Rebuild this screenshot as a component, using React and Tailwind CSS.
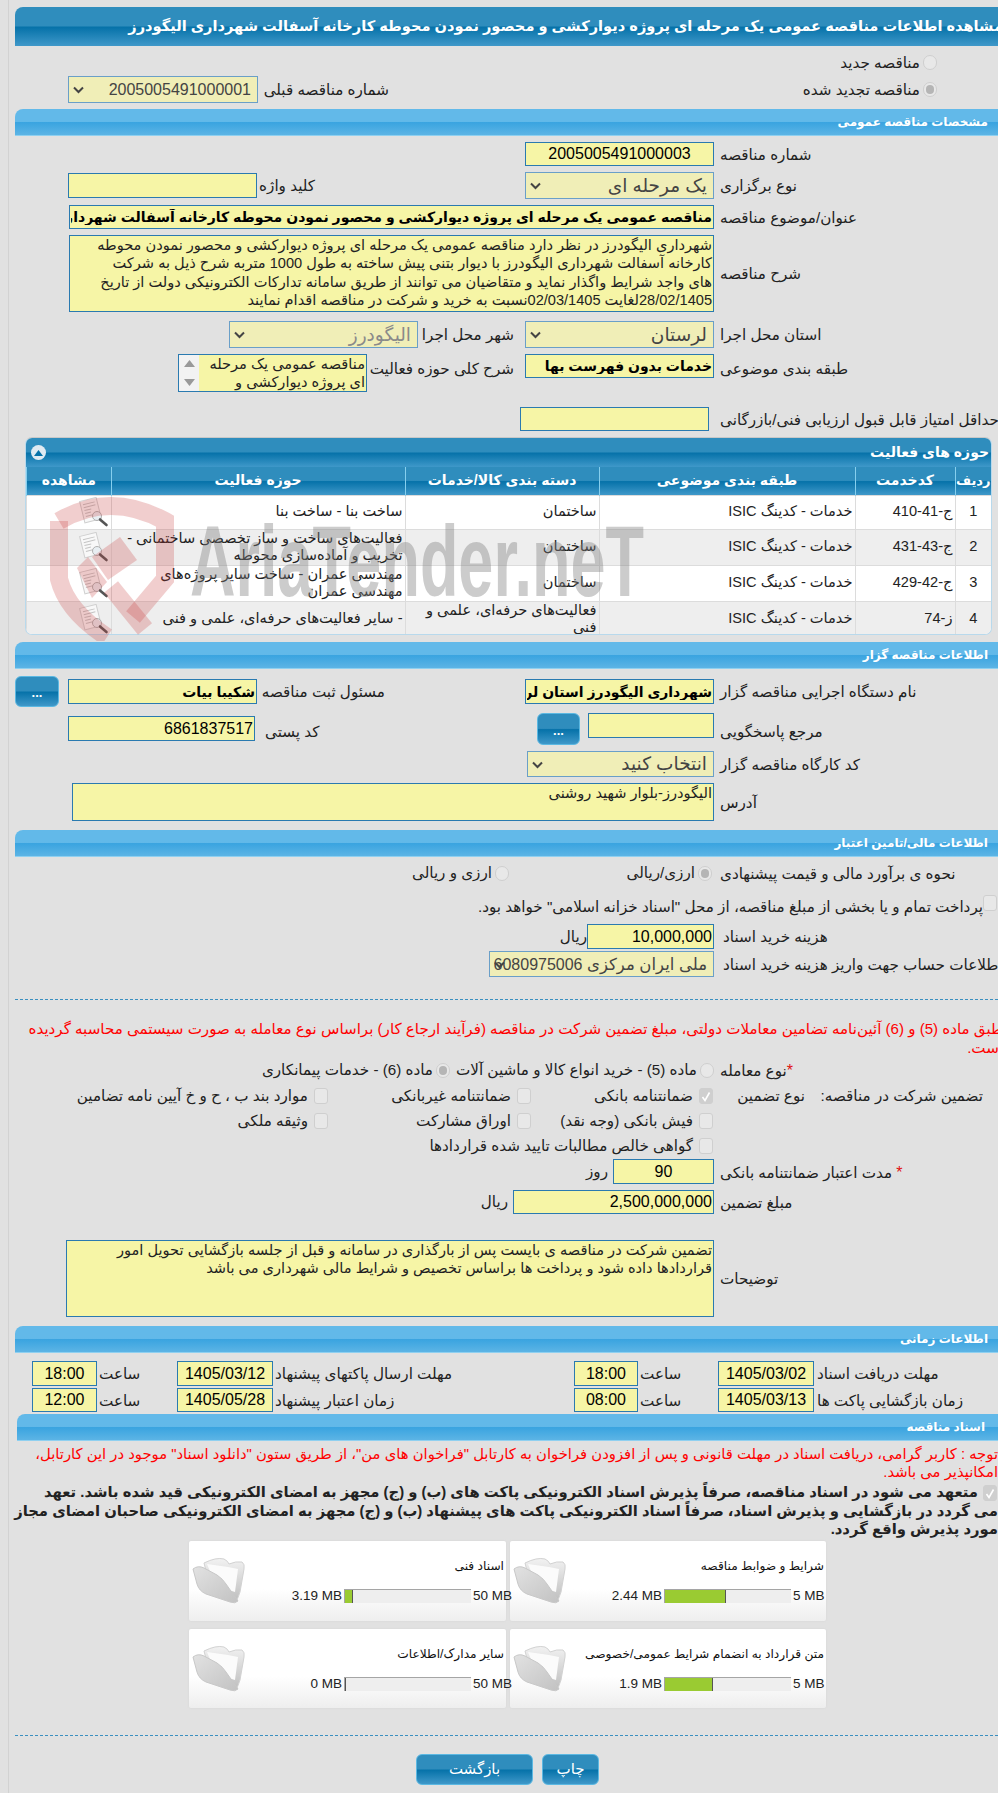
const darkBar = "bg-[linear-gradient(to_bottom,#2f8dbd_0%,#2f8dbd_48%,#0672a9_52%,#3f98c9_100%)]";
const Bar = ({ children, className = "" }) => (
  <div dir="rtl" className={"h-[27px] shrink-0 flex items-center pr-[20px] rounded-tl-[8px] border-b border-[#8fd0f0] bg-[linear-gradient(to_bottom,#62b9e9_0%,#62b9e9_48%,#3aa4e0_52%,#5cb4e5_100%)] text-white font-bold text-[12px] " + className}>
    {children}
  </div>
);
const Lbl = ({ children, className = "" }) => (
  <span className={"shrink-0 whitespace-nowrap text-left text-[15.2px] pt-[2px] text-[#222] " + className}>{children}</span>
);
const Txt = ({ children, className = "" }) => (
  <span className={"shrink-0 whitespace-nowrap text-[15.2px] pt-[1px] text-[#222] " + className}>{children}</span>
);
const Input = ({ value = "", bold = false, className = "" }) => (
  <input readOnly dir="rtl" value={value} className={"shrink-0 bg-[#f6f5a6] border border-[#2a7ab0] px-[1px] text-black outline-none " + (bold ? "font-bold text-[14px] " : "text-[16px] ") + className} />
);
const Area = ({ value, className = "" }) => (
  <textarea readOnly dir="rtl" value={value} className={"shrink-0 resize-none overflow-hidden bg-[#f6f5a6] border border-[#2a7ab0] px-[1px] text-[14.6px] leading-[18.3px] text-[#222] outline-none " + className} />
);
const Select = ({ children, className = "" }) => (
  <div className={"shrink-0 relative flex items-center justify-end bg-[#f0eeb7] border border-[#6a9fc8] pl-[4px] pr-[6px] text-[16px] whitespace-nowrap overflow-hidden " + className} dir="ltr">
    <svg className="absolute left-[3px] top-[8px]" width="13" height="10" viewBox="0 0 13 10"><path d="M2 2.5 L6.5 7 L11 2.5" fill="none" stroke="#444" strokeWidth="2" /></svg>
    <span dir="rtl">{children}</span>
  </div>
);
const Ar = ({ children }) => <span className="text-[18.5px]">{children}</span>;
const Radio = ({ on, className = "" }) => (
  <span className={"shrink-0 w-[14px] h-[15px] rounded-full bg-[#e8e8e8] border border-[#cfcfcf] flex items-center justify-center " + className}>
    {on && <span className="w-[8px] h-[9px] rounded-full bg-[#b5b5b5]" />}
  </span>
);
const Check = ({ on, className = "" }) => (
  <span className={"shrink-0 w-[14px] h-[16px] rounded-[3px] border border-[#cfcfcf] flex items-center justify-center " + (on ? "bg-[#cfcfcf] " : "bg-[#e8e8e8] ") + className}>
    {on && <svg width="10" height="11" viewBox="0 0 10 11"><path d="M1.5 6 L4 9.5 L8.5 1.5" fill="none" stroke="#fff" strokeWidth="1.6" /></svg>}
  </span>
);
const Dots = ({ className = "" }) => (
  <button className={"shrink-0 rounded-[6px] border border-[#5bb8e2] text-white text-[13px] font-bold flex items-end justify-center pb-[4px] " + darkBar + " " + className}>...</button>
);
const Row = ({ children, className = "" }) => (
  <div dir="rtl" className={"flex items-center " + className}>{children}</div>
);

const CheckCell = ({ on, children, className = "" }) => (
  <div className={"flex items-center shrink-0 " + className}>
    <Check on={on} />
    <Txt className="mr-[6px]">{children}</Txt>
  </div>
);

const Doc = () => (
  <svg width="30" height="30" viewBox="0 0 30 30" className="block">
    <g transform="rotate(-14 12 13)">
      <rect x="3" y="2" width="17" height="22" fill="#f8f8f8" stroke="#cfcfcf" />
      <path d="M5.5 6h12M5.5 9h12M5.5 12h7M5.5 15h6M5.5 18h10" stroke="#c4c4c4" strokeWidth="1" />
    </g>
    <circle cx="18" cy="19" r="4.5" fill="#e8eef2" stroke="#b0b0b0" />
    <path d="M21 22.5 L27.5 28" stroke="#555" strokeWidth="2.6" strokeLinecap="round" />
  </svg>
);

const Folder = () => (
  <svg width="54" height="48" viewBox="0 0 54 48" className="block">
    <defs>
      <linearGradient id="fa" x1="0" y1="0" x2="0" y2="1"><stop offset="0" stopColor="#f2f2f2" /><stop offset="1" stopColor="#bdbdbd" /></linearGradient>
      <linearGradient id="fb" x1="0" y1="0" x2="1" y2="1"><stop offset="0" stopColor="#e2e2e2" /><stop offset="1" stopColor="#c2c2c2" /></linearGradient>
    </defs>
    <path d="M12 7 Q24 1 32 3 Q36 5 37 8 Q44 5 50 6 Q53 8 52 13 L48 36 Q46 42 44 46 L20 38 Z" fill="url(#fa)" stroke="#d2d2d2" />
    <path d="M15 8 L36 11 L46 13 L43 36 L24 30 Z" fill="#fbfbfb" />
    <path d="M1 13 Q6 9 12 12 L25 19 Q31 23 34 28 L46 45 Q43 48 38 46 L14 38 Q7 35 5 28 Z" fill="url(#fb)" stroke="#c8c8c8" />
  </svg>
);

const Progress = ({ pct }) => (
  <div dir="ltr" className="w-[127px] h-[14px] shrink-0 bg-[#eeeeee] border-t border-l border-[#a5a5a5] mx-[2px]">
    <div className="h-full bg-[#9acb32] border-r border-[#555]" style={{ width: pct + "%" }} />
  </div>
);

const Card = ({ title, used, max, pct, w }) => (
  <div dir="rtl" className={"relative h-full pt-[16px] pr-[2px] shrink-0 rounded-[2px] bg-[linear-gradient(to_bottom,#ffffff_60%,#eeeeee_100%)] shadow-[0_0_2px_#d0d0d0] " + w}>
    <div className="text-[12.2px] text-[#111] whitespace-nowrap h-[20px]">{title}</div>
    <div className="flex items-center mt-[9px] text-[13.5px] text-[#222]">
      <span dir="ltr" className="pr-0 mr-[2px] w-[29px] text-right whitespace-nowrap">{max}</span>
      <Progress pct={pct} />
      <span dir="ltr" className="whitespace-nowrap">{used}</span>
    </div>
    <div className="absolute left-[3px] top-[15px]"><Folder /></div>
  </div>
);

const rows = [
  ["1", "ج-41-410", "خدمات - کدینگ ISIC", "ساختمان", "ساخت بنا - ساخت بنا", "h-[34px] bg-white"],
  ["2", "ج-43-431", "خدمات - کدینگ ISIC", "ساختمان", "فعالیت‌های ساخت و ساز تخصصی ساختمانی - تخریب و آماده‌سازی محوطه", "h-[35px] bg-[#eeeeee]"],
  ["3", "ج-42-429", "خدمات - کدینگ ISIC", "ساختمان", "مهندسی عمران - ساخت سایر پروژه‌های مهندسی عمران", "h-[35px] bg-white"],
  ["4", "ز-74", "خدمات - کدینگ ISIC", "فعالیت‌های حرفه‌ای، علمی و فنی", "- سایر فعالیت‌های حرفه‌ای، علمی و فنی", "h-[35px] bg-[#eeeeee]"],
];
const Th = ({ children, className = "" }) => (
  <th className={"border-l border-[#86cfee] font-bold text-white text-center whitespace-nowrap p-0 " + className}>{children}</th>
);
const Td = ({ children, className = "" }) => (
  <td className={"border-l border-t border-[#dcdcdc] text-[14.6px] leading-[17.5px] text-[#222] px-[2px] py-0 " + className}>{children}</td>
);

const TimeRow = ({ label1, date1, time1, label2, date2, time2, className = "" }) => (
  <Row className={className}>
    <Lbl className="w-[191px]">{label1}</Lbl>
    <Input value={date1} className="w-[96px] h-full mr-[3px] text-center" />
    <Lbl className="w-[43px] mr-[35px]">ساعت</Lbl>
    <Input value={time1} className="w-[64px] h-full mr-[2px] text-center" />
    <Lbl className="w-[184px] mr-[115px]">{label2}</Lbl>
    <Input value={date2} className="w-[96px] h-full mr-[2px] text-center" />
    <Lbl className="w-[42px] mr-[36px]">ساعت</Lbl>
    <Input value={time2} className="w-[65px] h-full mr-[2px] text-center" />
  </Row>
);

export default function App() {
  return (
    <div className="relative h-[1793px] w-full overflow-hidden bg-[#e1e1e1] font-['Liberation_Sans','DejaVu_Sans',sans-serif]">
      <div className="ml-[8px] border-l border-[#d2d2d2] pl-[6px] w-[1000px] h-full pt-[7px]">
        <div dir="rtl" className={"h-[39px] flex items-center pr-[5px] rounded-tl-[8px] text-white font-bold text-[14.6px] whitespace-nowrap " + darkBar}>
          مشاهده اطلاعات مناقصه عمومی یک مرحله ای پروژه دیوارکشی و محصور نمودن محوطه کارخانه آسفالت شهرداری الیگودرز
        </div>

        <Row className="mt-[6px] h-[21px] pr-[71px]">
          <Radio />
          <Txt className="mr-[3px]">مناقصه جدید</Txt>
        </Row>
        <Row className="mt-[3px] h-[27px] pr-[71px] justify-between">
          <div className="flex items-center">
            <Radio on />
            <Txt className="mr-[3px]">مناقصه تجدید شده</Txt>
          </div>
          <div className="flex items-center ml-[53px]">
            <Lbl className="w-[125px]">شماره مناقصه قبلی</Lbl>
            <Select className="w-[190px] h-[27px] mr-[6px] text-[#444]">2005005491000001</Select>
          </div>
        </Row>

        <Bar className="mt-[6px]">مشخصات مناقصه عمومی</Bar>

        <Row className="mt-[6px] h-[24px]">
          <Lbl className="w-[288px]">شماره مناقصه</Lbl>
          <Input value="2005005491000003" className="w-[189px] h-full mr-[6px] text-center" />
        </Row>
        <Row className="mt-[6px] h-[27px] justify-between">
          <div className="flex items-center">
            <Lbl className="w-[288px]">نوع برگزاری</Lbl>
            <Select className="w-[189px] h-[27px] mr-[6px] text-[#444]"><Ar>یک مرحله ای</Ar></Select>
          </div>
          <div className="flex items-center ml-[53px]">
            <Lbl className="w-[53px]">کلید واژه</Lbl>
            <Input className="w-[189px] h-[25px] mr-[5px]" />
          </div>
        </Row>
        <Row className="mt-[6px] h-[24px]">
          <Lbl className="w-[288px]">عنوان/موضوع مناقصه</Lbl>
          <Input bold value="مناقصه عمومی یک مرحله ای پروژه دیوارکشی و محصور نمودن محوطه کارخانه آسفالت شهرداری الیگودرز" className="w-[645px] h-full mr-[6px]" />
        </Row>
        <Row className="mt-[6px] h-[77px]">
          <Lbl className="w-[288px]">شرح مناقصه</Lbl>
          <Area className="w-[645px] h-full mr-[6px]" value={"شهرداری الیگودرز در نظر دارد مناقصه عمومی یک مرحله ای پروژه دیوارکشی و محصور نمودن محوطه\nکارخانه آسفالت شهرداری الیگودرز با دیوار بتنی پیش ساخته به طول 1000 متربه شرح ذیل به شرکت\nهای واجد شرایط واگذار نماید و متقاضیان می توانند از طریق سامانه تدارکات الکترونیکی دولت از تاریخ\n28/02/1405لغایت 02/03/1405نسبت به خرید و شرکت در مناقصه اقدام نمایند"} />
        </Row>
        <Row className="mt-[9px] h-[27px]">
          <Lbl className="w-[288px]">استان محل اجرا</Lbl>
          <Select className="w-[189px] h-full mr-[6px] text-[#444]"><Ar>لرستان</Ar></Select>
          <Lbl className="w-[90px] mr-[11px]">شهر محل اجرا</Lbl>
          <Select className="w-[189px] h-full mr-[6px] text-[#8a8a8a]"><Ar>الیگودرز</Ar></Select>
        </Row>
        <Row className="mt-[6px] h-[38px] items-start">
          <Lbl className="w-[288px] mt-[2px]">طبقه بندی موضوعی</Lbl>
          <Input bold value="خدمات بدون فهرست بها" className="w-[189px] h-[24px] mr-[6px]" />
          <Lbl className="w-[142px] mr-[11px] mt-[2px]">شرح کلی حوزه فعالیت</Lbl>
          <div className="w-[189px] h-[38px] mr-[5px] flex border border-[#2a7ab0] bg-[#f6f5a6] shrink-0">
            <div className="grow px-[1px] text-[14.6px] leading-[18px] text-[#222] overflow-hidden">مناقصه عمومی یک مرحله ای پروژه دیوارکشی و</div>
            <div className="w-[20px] shrink-0 bg-[#f2f2f2] flex flex-col items-center justify-between py-[5px]">
              <svg width="11" height="7" viewBox="0 0 11 7"><path d="M5.5 0 L11 7 H0 Z" fill="#999" /></svg>
              <svg width="11" height="7" viewBox="0 0 11 7"><path d="M5.5 7 L11 0 H0 Z" fill="#999" /></svg>
            </div>
          </div>
        </Row>
        <Row className="mt-[15px] h-[24px]">
          <Lbl className="w-[288px]">حداقل امتیاز قابل قبول ارزیابی فنی/بازرگانی</Lbl>
          <Input className="w-[189px] h-full mr-[11px]" />
        </Row>

        <div dir="rtl" className="mt-[6px] ml-[10px] w-[967px] h-[198px] rounded-[7px] overflow-hidden border border-[#b8d9ec] border-t-[#c8c8c8] bg-white">
          <div className={"h-[29px] flex items-center justify-between pr-[2px] pl-[5px] text-white font-bold text-[14px] " + darkBar}>
            <span>حوزه های فعالیت</span>
            <span className="w-[15px] h-[15px] rounded-full bg-[#dfeaf2] flex items-center justify-center">
              <svg width="9" height="6" viewBox="0 0 9 6"><path d="M4.5 0 L9 6 H0 Z" fill="#0672a9" /></svg>
            </span>
          </div>
          <table className="w-full table-fixed border-collapse">
            <colgroup>
              <col className="w-[36px]" />
              <col className="w-[100px]" />
              <col className="w-[256px]" />
              <col className="w-[194px]" />
              <col className="w-[294px]" />
              <col />
            </colgroup>
            <thead>
              <tr className={"h-[28px] " + darkBar}>
                <Th className="text-[13px]">ردیف</Th><Th className="text-[14px]">کدخدمت</Th><Th className="text-[14px]">طبقه بندی موضوعی</Th><Th className="text-[14px]">دسته بندی کالا/خدمات</Th><Th className="text-[14px]">حوزه فعالیت</Th><Th className="text-[14px]">مشاهده</Th>
              </tr>
            </thead>
            <tbody>
              {rows.map((r) => (
                <tr key={r[0]} className={r[5]}>
                  <Td className="text-center">{r[0]}</Td>
                  <Td className="text-right">{r[1]}</Td>
                  <Td className="text-right">{r[2]}</Td>
                  <Td className="text-right">{r[3]}</Td>
                  <Td className="text-right">{r[4]}</Td>
                  <Td className="text-right"><div className="flex justify-start"><Doc /></div></Td>
                </tr>
              ))}
            </tbody>
          </table>
        </div>

        <Bar className="mt-[7px]">اطلاعات مناقصه گزار</Bar>
        <Row className="mt-[7px] h-[31px]">
          <Lbl className="w-[288px]">نام دستگاه اجرایی مناقصه گزار</Lbl>
          <Input bold value="شهرداری الیگودرز استان لرستان" className="w-[189px] h-[25px] mr-[6px]" />
          <Lbl className="w-[121px] mr-[140px]">مسئول ثبت مناقصه</Lbl>
          <Input bold value="شکیبا بیات" className="w-[189px] h-[25px] mr-[7px]" />
          <Dots className="w-[44px] h-[31px] mr-[9px]" />
        </Row>
        <Row className="mt-[6px] h-[32px] items-start">
          <Lbl className="w-[288px] mt-[6px]">مرجع پاسخگویی</Lbl>
          <Input className="w-[126px] h-[25px] mr-[6px]" />
          <Dots className="w-[43px] h-[32px] mr-[8px]" />
          <Lbl className="w-[60px] mr-[212px] mt-[6px]">کد پستی</Lbl>
          <Input value="6861837517" className="w-[187px] h-[25px] mr-[10px] mt-[3px]" />
        </Row>
        <Row className="mt-[6px] h-[26px]">
          <Lbl className="w-[288px]">کد کارگاه مناقصه گزار</Lbl>
          <Select className="w-[187px] h-full mr-[6px] text-[#444]"><Ar>انتخاب کنید</Ar></Select>
        </Row>
        <Row className="mt-[6px] h-[38px]">
          <Lbl className="w-[288px]">آدرس</Lbl>
          <Area className="w-[642px] h-full mr-[6px]" value="الیگودرز-بلوار شهید روشنی" />
        </Row>

        <Bar className="mt-[9px]">اطلاعات مالی/تامین اعتبار</Bar>
        <Row className="mt-[6px] h-[20px]">
          <Lbl className="w-[288px]">نحوه ی برآورد مالی و قیمت پیشنهادی</Lbl>
          <Radio on className="mr-[8px]" />
          <Txt className="mr-[3px] w-[186px]">ارزی/ریالی</Txt>
          <Radio />
          <Txt className="mr-[3px]">ارزی و ریالی</Txt>
        </Row>
        <Row className="mt-[14px] h-[20px] pr-[11px] items-center">
          <Check className="-mt-[8px]" />
          <Txt>پرداخت تمام و یا بخشی از مبلغ مناقصه، از محل "اسناد خزانه اسلامی" خواهد بود.</Txt>
        </Row>
        <Row className="mt-[7px] h-[25px]">
          <Lbl className="w-[285px]">هزینه خرید اسناد</Lbl>
          <Input value="10,000,000" className="w-[127px] h-full mr-[9px]" />
          <Txt>ریال</Txt>
        </Row>
        <Row className="mt-[2px] h-[26px]">
          <Lbl className="w-[285px]">اطلاعات حساب جهت واریز هزینه خرید اسناد</Lbl>
          <Select className="w-[225px] h-full mr-[9px] text-[#444]"><span className="text-[16.5px]">ملی ایران مرکزی</span> 6080975006</Select>
        </Row>

        <div className="mt-[22px] border-t border-dashed border-[#3a8fc0]" />

        <div dir="rtl" className="mt-[19px] ml-[9px] pr-[5px] text-[15.1px] leading-[19px] text-[#f00] whitespace-nowrap">
          طبق ماده (5) و (6) آئین‌نامه تضامین معاملات دولتی، مبلغ تضمین شرکت در مناقصه (فرآیند ارجاع کار) براساس نوع معامله به صورت سیستمی محاسبه گردیده
          <br />است.
        </div>

        <Row className="mt-[3px] h-[20px]">
          <Lbl className="w-[288px]"><span className="text-[#e01010] text-[16px]">*</span>نوع معامله</Lbl>
          <Radio className="mr-[6px]" />
          <Txt className="mr-[3px] w-[247px]">ماده (5) - خرید انواع کالا و ماشین آلات</Txt>
          <Radio on />
          <Txt className="mr-[3px]">ماده (6) - خدمات پیمانکاری</Txt>
        </Row>
        <Row className="mt-[6px] h-[20px]">
          <div className="w-[295px] shrink-0 flex pr-[25px]">
            <Txt className="w-[178px]">تضمین شرکت در مناقصه:</Txt>
            <Txt>نوع تضمین</Txt>
          </div>
          <CheckCell on className="w-[182px]">ضمانتنامه بانکی</CheckCell>
          <CheckCell className="w-[203px]">ضمانتنامه غیربانکی</CheckCell>
          <CheckCell>موارد بند ب ، ح و خ آیین نامه تضامین</CheckCell>
        </Row>
        <Row className="mt-[5px] h-[20px] pr-[295px]">
          <CheckCell className="w-[182px]">فیش بانکی (وجه نقد)</CheckCell>
          <CheckCell className="w-[203px]">اوراق مشارکت</CheckCell>
          <CheckCell>وثیقه ملکی</CheckCell>
        </Row>
        <Row className="mt-[5px] h-[20px] pr-[295px]">
          <CheckCell>گواهی خالص مطالبات تایید شده قراردادها</CheckCell>
        </Row>
        <Row className="mt-[3px] h-[25px]">
          <Lbl className="w-[288px]"><span className="text-[#e01010] text-[16px] ml-[4px]">*</span>مدت اعتبار ضمانتنامه بانکی</Lbl>
          <Input value="90" className="w-[101px] h-full mr-[6px] text-center" />
          <Txt className="mr-[5px]">روز</Txt>
        </Row>
        <Row className="mt-[6px] h-[24px]">
          <Lbl className="w-[288px]">مبلغ تضمین</Lbl>
          <Input value="2,500,000,000" className="w-[201px] h-full mr-[6px]" />
          <Txt className="mr-[5px]">ریال</Txt>
        </Row>
        <Row className="mt-[26px] h-[77px]">
          <Lbl className="w-[288px]">توضیحات</Lbl>
          <Area className="w-[648px] h-full mr-[6px]" value="تضمین شرکت در مناقصه ی بایست پس از بارگذاری در سامانه و قبل از جلسه بازگشایی تحویل امور قراردادها داده شود و پرداخت ها براساس تخصیص و شرایط مالی شهرداری می باشد" />
        </Row>

        <Bar className="mt-[9px]">اطلاعات زمانی</Bar>
        <TimeRow className="mt-[8px] h-[25px]" label1="مهلت دریافت اسناد" date1="1405/03/02" time1="18:00" label2="مهلت ارسال پاکتهای پیشنهاد" date2="1405/03/12" time2="18:00" />
        <TimeRow className="mt-[2px] h-[24px]" label1="زمان بازگشایی پاکت ها" date1="1405/03/13" time1="08:00" label2="زمان اعتبار پیشنهاد" date2="1405/05/28" time2="12:00" />

        <Bar className="mt-[2px] ml-[2px] !pr-[23px]">اسناد مناقصه</Bar>
        <div dir="rtl" className="mt-[4px] pr-[10px] text-[14.8px] leading-[18px] text-[#f00] whitespace-nowrap">
          توجه : کاربر گرامی، دریافت اسناد در مهلت قانونی و پس از افزودن فراخوان به کارتابل "فراخوان های من"، از طریق ستون "دانلود اسناد" موجود در این کارتابل،
          <br />امکانپذیر می باشد.
        </div>
        <div dir="rtl" className="mt-[2px] pr-[10px] text-[14.8px] leading-[18.5px] font-bold text-[#222] whitespace-nowrap">
          <Check on className="inline-flex align-middle ml-[5px] mr-[1px]" />
          متعهد می شود در اسناد مناقصه، صرفاً پذیرش اسناد الکترونیکی پاکت های (ب) و (ج) مجهز به امضای الکترونیکی قید شده باشد. تعهد
          <br />می گردد در بازگشایی و پذیرش اسناد، صرفاً اسناد الکترونیکی پاکت های پیشنهاد (ب) و (ج) مجهز به امضای الکترونیکی صاحبان امضای مجاز
          <br />مورد پذیرش واقع گردد.
        </div>

        <div dir="rtl" className="mt-[2px] pr-[182px] flex gap-x-[4px] h-[80px]">
          <Card w="w-[316px]" title="شرایط و ضوابط مناقصه" used="2.44 MB" max="5 MB" pct={48.8} />
          <Card w="w-[317px]" title="اسناد فنی" used="3.19 MB" max="50 MB" pct={6.4} />
        </div>
        <div dir="rtl" className="mt-[8px] pr-[182px] flex gap-x-[4px] h-[79px]">
          <Card w="w-[316px]" title="متن قرارداد به انضمام شرایط عمومی/خصوصی" used="1.9 MB" max="5 MB" pct={38} />
          <Card w="w-[317px]" title="سایر مدارک/اطلاعات" used="0 MB" max="50 MB" pct={0} />
        </div>

        <div className="mt-[27px] border-t border-dashed border-[#3a8fc0]" />

        <Row className="mt-[18px] pr-[409px] h-[31px]">
          <button className={"w-[57px] h-full rounded-[6px] border border-[#5bb8e2] text-white text-[15px] " + darkBar}>چاپ</button>
          <button className={"w-[117px] h-full mr-[9px] rounded-[6px] border border-[#5bb8e2] text-white text-[15px] " + darkBar}>بازگشت</button>
        </Row>
      </div>

      <svg className="absolute left-[45px] top-[495px] pointer-events-none" width="135" height="146" viewBox="0 0 135 146">
        <g fill="none" stroke="#c83c3c" strokeOpacity=".25" strokeWidth="18">
          <path d="M14 26 Q65 -4 120 26 V84 L88 122" />
          <path d="M14 26 V84 Q22 116 62 142" />
          <path d="M66 92 L100 134" />
        </g>
        <g fill="#c83c3c" fillOpacity=".25">
          <path d="M75 42 L92 65 L63 85 L47 62 Z" />
          <path d="M43 62 L62 87 L47 103 L32 73 Z" />
        </g>
      </svg>
      <div dir="ltr" className="absolute left-[190px] top-[505px] origin-left scale-x-[0.63] whitespace-nowrap pointer-events-none font-['Liberation_Sans',sans-serif] font-bold text-[100px] leading-[112px] text-[#808080]/40">
        AriaTender.neT
      </div>
    </div>
  );
}
